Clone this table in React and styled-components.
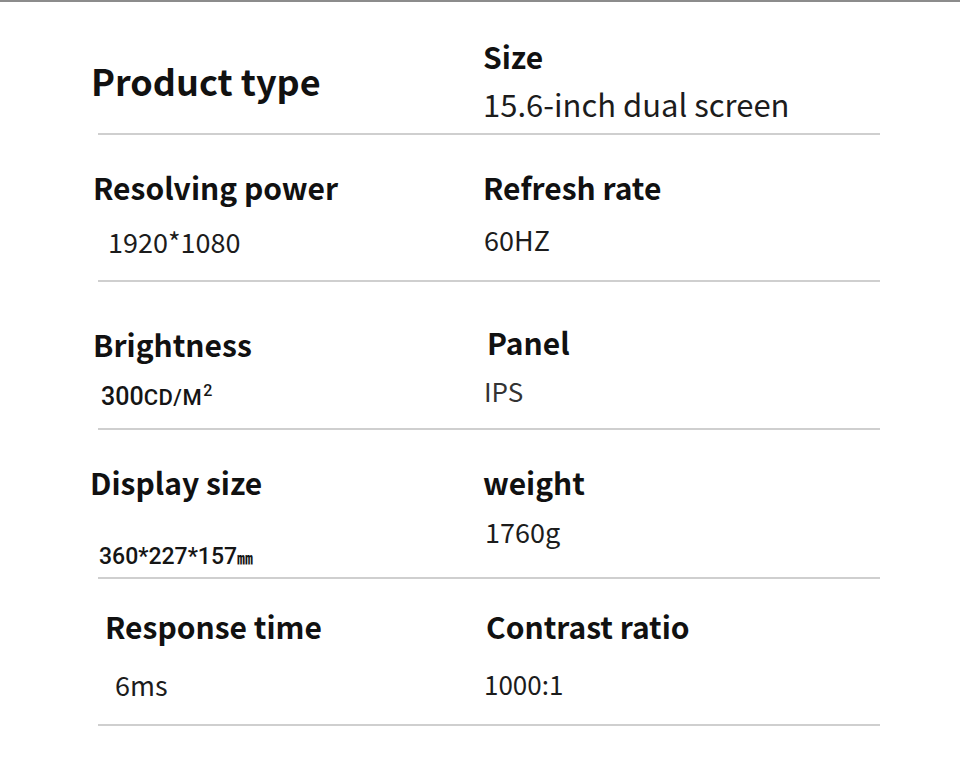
import React from "react";
import styled, { createGlobalStyle } from "styled-components";

const GlobalStyle = createGlobalStyle`
  body {
    margin: 0;
    background: #fff;
  }
`;

const specs = [
  {
    h: 133,
    left: { label: "Product type", top: 60, shift: -7, big: true },
    right: { label: "Size", value: "15.6-inch dual screen", top: 39, gap: 17, size: 31 },
  },
  {
    h: 147,
    left: { label: "Resolving power", value: "1920*1080", top: 37, gap: 26, shift: -5, indent: 15 },
    right: { label: "Refresh rate", value: "60HZ", top: 37, gap: 24, indent: 1 },
  },
  {
    h: 148,
    left: { label: "Brightness", value: "brightness", top: 47, gap: 21, shift: -5, indent: 8 },
    right: { label: "Panel", value: "IPS", top: 45, gap: 21, shift: 4, indent: -3, size: 26, light: true },
  },
  {
    h: 149,
    left: { label: "Display size", value: "size", top: 37, gap: 42, shift: -8, indent: 9 },
    right: { label: "weight", value: "1760g", top: 37, gap: 21, indent: 2 },
  },
  {
    h: 147,
    left: { label: "Response time", value: "6ms", top: 32, gap: 30, shift: 7, indent: 10 },
    right: { label: "Contrast ratio", value: "1000:1", top: 32, gap: 30, shift: 3, indent: -2, size: 26 },
  },
];

const renderValue = (v) => {
  if (v === "brightness") {
    return (
      <UnitValue $size={25}>
        300<Unit>CD/M</Unit><Sup>2</Sup>
      </UnitValue>
    );
  }
  if (v === "size") {
    return (
      <UnitValue $size={23}>
        360*227*157<Mm>㎜</Mm>
      </UnitValue>
    );
  }
  return v;
};

const SpecCell = ({ cell }) => (
  <Cell $top={cell.top} $shift={cell.shift || 0}>
    <Label $big={cell.big}>{cell.label}</Label>
    {cell.value && (
      <Value
        $gap={cell.gap}
        $indent={cell.indent || 0}
        $size={cell.size || 27}
        $light={cell.light}
      >
        {renderValue(cell.value)}
      </Value>
    )}
  </Cell>
);

const App = () => {
  return (
    <Page>
      <GlobalStyle />
      <Table>
        {specs.map((row, i) => (
          <Row key={i} $h={row.h}>
            <SpecCell cell={row.left} />
            <SpecCell cell={row.right} />
          </Row>
        ))}
      </Table>
    </Page>
  );
};

export default App;

const Page = styled.div`
  width: 960px;
  min-height: 766px;
  box-sizing: border-box;
  border-top: 2px solid #8c8c8c;
  background: #fff;
  font-family: "Noto Sans CJK SC", "Noto Sans", sans-serif;
`;

const Table = styled.div`
  margin-left: 98px;
  width: 782px;
`;

const Row = styled.div`
  display: grid;
  grid-template-columns: 385px 1fr;
  height: ${(p) => p.$h}px;
  box-sizing: border-box;
  border-bottom: 2px solid #cfcfcf;
`;

const Cell = styled.div`
  display: flex;
  flex-direction: column;
  align-items: flex-start;
  padding-top: ${(p) => p.$top}px;
  margin-left: ${(p) => p.$shift}px;
`;

const Label = styled.div`
  font-size: ${(p) => (p.$big ? 36 : 30)}px;
  line-height: 1;
  font-weight: 700;
  color: #111;
  white-space: nowrap;
`;

const Value = styled.div`
  margin-top: ${(p) => p.$gap}px;
  margin-left: ${(p) => p.$indent}px;
  font-size: ${(p) => p.$size}px;
  line-height: 1;
  font-weight: 400;
  color: ${(p) => (p.$light ? "#333" : "#1c1c1c")};
  white-space: nowrap;
`;

const UnitValue = styled.span`
  font-family: "Roboto", "Liberation Sans", sans-serif;
  font-weight: 500;
  font-size: ${(p) => p.$size}px;
  color: #151515;
`;

const Unit = styled.span`
  font-size: 22px;
  letter-spacing: 0.5px;
`;

const Sup = styled.span`
  font-size: 16px;
  vertical-align: 9px;
  margin-left: 1px;
`;

const Mm = styled.span`
  font-family: "Noto Sans CJK SC", sans-serif;
  font-size: 16px;
  font-weight: 700;
  letter-spacing: -1px;
`;
